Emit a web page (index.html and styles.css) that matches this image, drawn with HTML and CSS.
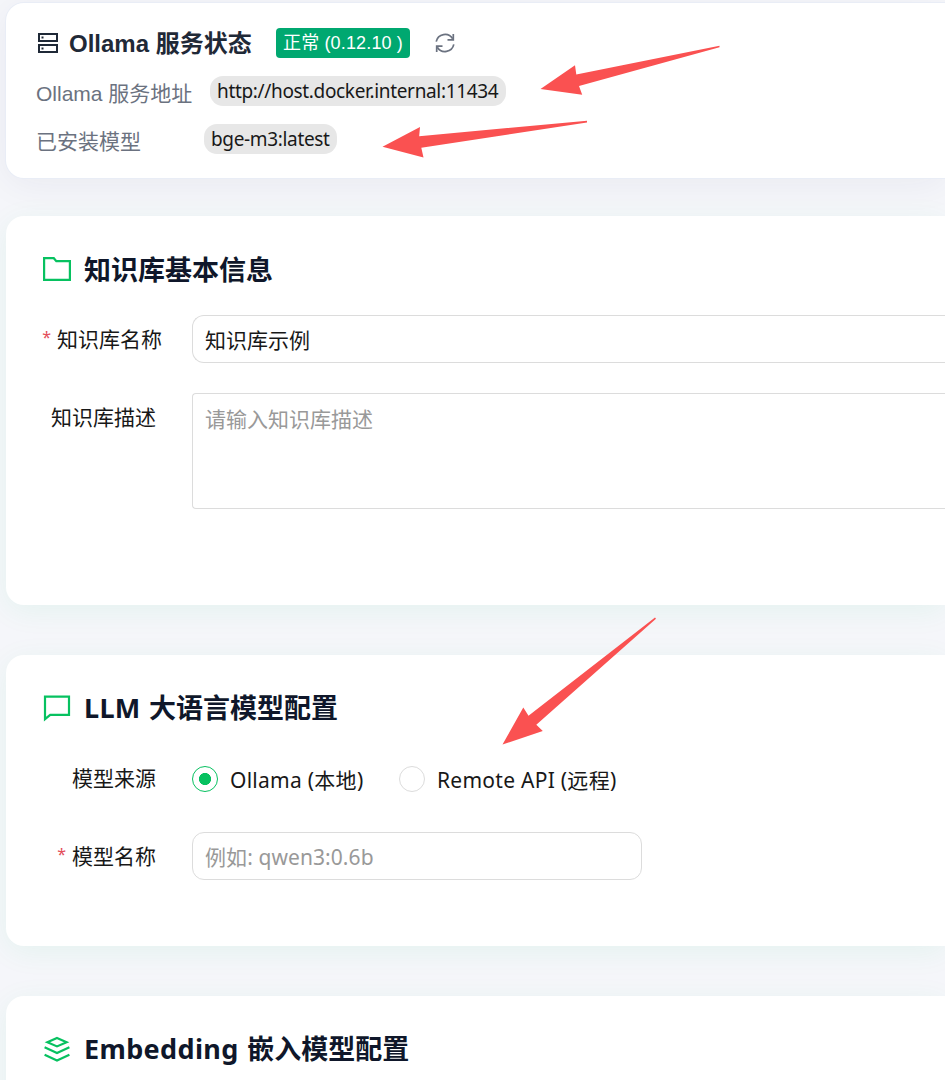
FILE: index.html
```html
<!DOCTYPE html>
<html lang="zh-CN">
<head>
<meta charset="utf-8">
<title>知识库配置</title>
<link rel="stylesheet" href="styles.css">
</head>
<body>
<main class="page">
  <section class="card status">
    <div class="status-head">
      <svg class="icon-server" viewBox="0 0 20 20" width="20" height="20"><path d="M1 1h18v7H1zM1 12h18v7H1z" fill="none" stroke="currentColor" stroke-width="2"/><path d="M3.5 3.5h2v2h-2zM3.5 14.5h2v2h-2z" fill="currentColor"/></svg>
      <h2 class="status-title">Ollama 服务状态</h2>
      <span class="tag">正常 (0.12.10 )</span>
      <svg class="icon-refresh" viewBox="0 0 20 20" width="20" height="20" fill="none" stroke="currentColor" stroke-width="1.7"><path d="M1.2 8.6A9 9 0 0 1 17.7 5.8M18.8 11.4A9 9 0 0 1 2.3 14.2"/><path d="M18.3 1v5.8h-5.8M1.7 19v-5.8h5.8"/></svg>
    </div>
    <div class="status-row address"><span class="status-label">Ollama 服务地址</span><span class="pill pill-url">http://host.docker.internal:11434</span></div>
    <div class="status-row models"><span class="status-label">已安装模型</span><span class="pill pill-model">bge-m3:latest</span></div>
  </section>

  <section class="card basic">
    <h3 class="heading"><svg viewBox="0 0 28 28" width="28" height="28" fill="none" stroke="currentColor" stroke-width="2.2"><path d="M1.1 3.200h9.700l2.500 3H26.900v18.700H1.100z"/></svg><span>知识库基本信息</span></h3>
    <div class="field">
      <label class="label label-wide"><i class="star">*</i>知识库名称</label>
      <div class="input">知识库示例</div>
    </div>
    <div class="field field-desc">
      <label class="label">知识库描述</label>
      <div class="textarea">请输入知识库描述</div>
    </div>
  </section>

  <section class="card llm">
    <h3 class="heading"><svg viewBox="0 0 28 28" width="28" height="28" fill="none" stroke="currentColor" stroke-width="2.200"><path d="M2 2.600h24v18.200H7.200L2 25.200z"/></svg><span class="heading-text"><span class="h-llm">LLM</span> 大语言模型配置</span></h3>
    <div class="field source">
      <label class="label">模型来源</label>
      <div class="radios">
        <span class="radio checked"></span><span class="radio-text text-local">Ollama (本地)</span>
        <span class="radio"></span><span class="radio-text text-remote">Remote API (远程)</span>
      </div>
    </div>
    <div class="field">
      <label class="label"><i class="star">*</i>模型名称</label>
      <div class="input input-short">例如: qwen3:0.6b</div>
    </div>
  </section>

  <section class="card embedding">
    <h3 class="heading"><svg viewBox="0 0 28 28" width="28" height="28" fill="none" stroke="currentColor" stroke-width="2.200"><path d="M14 3L23.600 7.200L14 11.400L4.400 7.200z"/><path d="M1.600 12.300L14 18l12.400-5.700M1.600 19.800L14 25.500l12.400-5.700"/></svg><span class="heading-text"><span class="h-emb">Embedding</span> 嵌入模型配置</span></h3>
  </section>

  <svg class="arrows" viewBox="0 0 945 1080" width="945" height="1080">
    <path d="M540.500 89L575 65.300l1.300 9.300L719.500 45.700v1.500L579 86l3.200 8.700z"/>
    <path d="M382.500 146.800L420 127l-.8 9.200L587 120.800v1.700L421.300 147.800l2.200 9.700z"/>
    <path d="M502.500 744.500L523.300 707.500l5.200 8.200L655 617.500l1 1.200L536.300 724.800l6.500 6.200z"/>
  </svg>
</main>
</body>
</html>
```
FILE: styles.css
```css
* { box-sizing: border-box; }

body {
  margin: 0;
  overflow: hidden;
  background: #f5f6fa;
  color: #181818;
  font-family: "Noto Sans", "Noto Sans CJK SC", sans-serif;
  font-size: 21px;
}

.page {
  position: relative;
  height: 1080px;
  padding: 3px 0 0 6px;
  overflow: hidden;
}

.card {
  background: #fff;
  border-radius: 18px 0 0 18px;
  box-shadow: 0 6px 30px rgba(7, 193, 96, .07);
}

h2, h3 { margin: 0; }

.status {
  height: 175px;
  padding: 25px 30px 0;
  box-shadow: 0 0 0 1px #e9edf6, 0 6px 36px rgba(30, 40, 80, .06);
}

.status-head { display: flex; align-items: center; height: 30px; }
.icon-server { margin: 0 11px 0 2px; color: #1f2937; }

.status-title {
  width: 207px;
  padding-top: 2px;
  color: #1f2937;
  font: bold 24px/30px "Liberation Sans", "Noto Sans CJK SC", sans-serif;
  white-space: nowrap;
}

.tag {
  width: 134px;
  height: 30px;
  padding-left: 7px;
  border-radius: 4px;
  background: #00a870;
  color: #fff;
  font: 18px/31px "Liberation Sans", "Noto Sans CJK SC", sans-serif;
  letter-spacing: .15px;
  white-space: nowrap;
}

.icon-refresh { margin-left: 24.500px; color: #6b7280; }

.status-row { display: flex; align-items: flex-start; height: 30px; }
.address { margin-top: 18px; }
.models { margin-top: 18px; }

.status-label {
  width: 174px;
  color: #6b7280;
  font: 21px/35px "Liberation Sans", "Noto Sans CJK SC", sans-serif;
  white-space: nowrap;
}

.models .status-label { width: 168px; }

.pill {
  height: 30px;
  padding-left: 7px;
  border-radius: 13px;
  background: #e7e7e7;
  font-size: 19px;
  line-height: 30px;
  letter-spacing: -.34px;
  white-space: nowrap;
}

.pill-url { width: 296px; }
.pill-model { width: 133px; }

.basic { height: 389px; margin-top: 38px; padding: 36px 0 0 37px; }
.llm { height: 291px; margin-top: 50px; padding: 36px 0 0 37px; }
.embedding { height: 200px; margin-top: 50px; padding: 36px 0 0 37px; }

.heading {
  display: flex;
  align-items: center;
  gap: 13px;
  height: 36px;
  color: #0f172a;
  font-size: 27px;
  line-height: 36px;
  white-space: nowrap;
}

.heading svg { margin-bottom: 2px; color: #07c160; }
.heading-text { padding-bottom: 2px; word-spacing: 1.500px; }
.h-llm { letter-spacing: .3px; }
.h-emb { letter-spacing: .36px; }

.field { display: flex; margin-top: 27px; }
.field-desc { margin-top: 30px; }

.label {
  display: flex;
  flex: none;
  justify-content: flex-end;
  width: 149px;
  height: 48px;
  padding-right: 36px;
  line-height: 48px;
  white-space: nowrap;
}

.label-wide { padding-right: 30px; }

.star {
  margin-right: 6px;
  color: #e34d59;
  font-style: normal;
  font-size: 16px;
  line-height: 44px;
}

.input {
  flex: 1;
  height: 48px;
  padding-left: 12px;
  border: 1px solid #dcdcdc;
  border-right: 0;
  border-radius: 12px 0 0 12px;
  line-height: 48px;
}

.input-short {
  flex: none;
  width: 450px;
  border-right: 1px solid #dcdcdc;
  border-radius: 12px;
  color: #999;
  letter-spacing: .08px;
}

.textarea {
  flex: 1;
  height: 116px;
  padding: 9px 12px;
  border: 1px solid #dcdcdc;
  border-right: 0;
  border-radius: 4px 0 0 4px;
  color: #999;
  line-height: 33px;
}

.source { margin-top: 28px; }
.source .label { line-height: 46px; }
.source + .field { margin-top: 29px; }
.radios { display: flex; align-items: center; height: 48px; }

.radio {
  width: 26px;
  height: 26px;
  border: 1px solid #dcdcdc;
  border-radius: 50%;
}

.checked {
  border-color: #07c160;
  background: radial-gradient(circle, #07c160 5.700px, transparent 6.400px);
}

.radio-text { margin-left: 12px; letter-spacing: .27px; white-space: nowrap; }
.text-local { width: 169px; }

.arrows { position: absolute; top: 0; left: 0; fill: #fa5151; }
```
